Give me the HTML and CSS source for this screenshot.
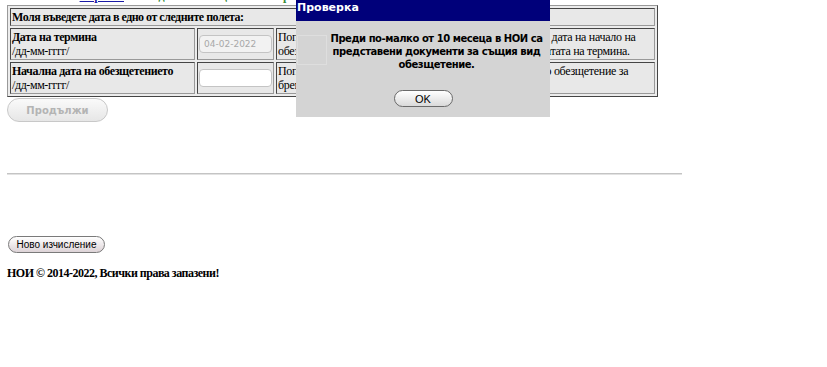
FILE: index.html
```html
<!DOCTYPE html>
<html>
<head>
    <meta http-equiv="Content-Type" content="text/html; charset=UTF-8">
    <link rel="stylesheet" href="styles.css">
</head>
<body>
    <div class="steps">
        Стъпка 2 от 3 <a href="#">Обратно</a> - <span class="note">Въведените обезщетения за бременност и раждане</span>
    </div>

    <table class="form-table">
        <tr>
            <td colspan="3" class="caption">Моля въведете дата в едно от следните полета:</td>
        </tr>
        <tr>
            <td class="label"><strong>Дата на термина</strong><br>/дд-мм-гггг/</td>
            <td class="field"><input type="text" class="date-input" value="04-02-2022" disabled></td>
            <td class="hint">Попълнете, ако искате да посочите различна от термина дата на начало на<br>обезщетението, различна от изчислената служебно от датата на термина.</td>
        </tr>
        <tr>
            <td class="label"><strong>Начална дата на обезщетението</strong><br>/дд-мм-гггг/</td>
            <td class="field"><input type="text" class="date-input"></td>
            <td class="hint">Попълнете, ако търсите обезщетение след изтекло друго обезщетение за<br>бременност и раждане.</td>
        </tr>
    </table>

    <button class="btn-continue" disabled>Продължи</button>

    <hr class="divider">

    <button class="btn-new">Ново изчисление</button>

    <p class="footer">НОИ © 2014-2022, Всички права запазени!</p>

    <div class="dialog">
        <div class="dialog-title">Проверка</div>
        <div class="dialog-body">
            <div class="dialog-icon"></div>
            <div class="dialog-message">Преди по-малко от 10 месеца в НОИ са<br>представени документи за същия вид<br>обезщетение.</div>
        </div>
        <div class="dialog-buttons">
            <button class="btn-ok">OK</button>
        </div>
    </div>
</body>
</html>
```

FILE: styles.css
```css
body {
    margin: 0 7px;
    font-family: "Liberation Serif", serif;
    font-size: 12px;
    letter-spacing: -0.3px;
    color: #000;
    background: #fff;
}

.steps {
    margin-top: -11px;
    height: 15px;
    line-height: 15px;
    font-weight: bold;
    color: #333;
    white-space: nowrap;
}

.steps a {
    color: #1a1aa6;
}

.note {
    color: #3b8c3b;
}

.form-table {
    width: 651px;
    margin-top: 1px;
    border: 1px outset #999;
    border-spacing: 2px;
    background-color: #ececec;
}

.form-table td {
    border: 1px inset #999;
    padding: 1px;
    background-color: #e8e8e8;
    line-height: 14px;
}

.caption {
    font-weight: bold;
    letter-spacing: -0.5px;
}

.label {
    width: 181px;
    vertical-align: top;
    padding-top: 2px;
    padding-bottom: 2px;
    letter-spacing: -0.4px;
}

.field {
    width: 71px;
    text-align: center;
}

.hint {
    vertical-align: top;
    padding-top: 2px;
    white-space: nowrap;
}

.date-input {
    box-sizing: border-box;
    width: 73px;
    height: 18px;
    margin: 0;
    padding: 0 4px;
    border: 1px solid #c4c4c4;
    border-radius: 4px;
    background: #fff;
    font-family: "DejaVu Sans", sans-serif;
    font-size: 9px;
    letter-spacing: 0;
    color: #000;
}

.date-input:disabled {
    background: #f2f2f2;
    color: #a8a8a8;
}

.btn-continue {
    display: block;
    width: 101px;
    height: 24px;
    margin-top: 1px;
    border: 1px solid #c8c8c8;
    border-radius: 12px;
    background: linear-gradient(#fafafa, #e6e6e6);
    font-family: "DejaVu Sans", sans-serif;
    font-size: 10px;
    font-weight: bold;
    letter-spacing: 0;
    color: #b4b4b4;
}

.divider {
    width: 675px;
    margin: 51px 0 0 0;
    height: 0;
    border: 0;
    border-top: 1px solid #c4c4c4;
    border-bottom: 1px solid #e2e2e2;
}

.btn-new {
    display: block;
    width: 97px;
    height: 17px;
    margin: 61px 0 0 1px;
    padding: 0;
    border: 1px solid #7a7a7a;
    border-radius: 9px;
    background: linear-gradient(#ffffff, #ddd3d7);
    font-family: "Liberation Sans", sans-serif;
    font-size: 10px;
    letter-spacing: 0;
    color: #000;
}

.footer {
    margin: 13px 0 0 0;
    font-weight: bold;
    font-size: 12px;
    letter-spacing: -0.5px;
}

.dialog {
    position: absolute;
    top: 0;
    left: 296px;
    width: 254px;
    height: 117px;
    background: #d4d4d4;
    font-family: "DejaVu Sans", sans-serif;
    letter-spacing: 0;
}

.dialog-title {
    height: 21px;
    line-height: 16px;
    padding-left: 1px;
    background: #00007a;
    color: #fff;
    font-size: 11px;
    font-weight: bold;
}

.dialog-body {
    display: flex;
    align-items: flex-start;
    padding: 14px 0 0 1px;
    height: 55px;
}

.dialog-icon {
    flex: none;
    width: 30px;
    height: 30px;
    box-sizing: border-box;
    border: 1px solid #dedede;
}

.dialog-message {
    flex: 1;
    padding-right: 4px;
    margin-top: -3px;
    text-align: center;
    font-size: 10px;
    font-weight: bold;
    letter-spacing: -0.45px;
    line-height: 13px;
    white-space: nowrap;
}

.dialog-buttons {
    text-align: center;
    padding-top: 0;
}

.btn-ok {
    width: 59px;
    height: 17px;
    padding: 0;
    border: 1px solid #6a6a6a;
    border-radius: 9px;
    background: linear-gradient(#ffffff, #dadada);
    font-family: "Liberation Sans", sans-serif;
    font-size: 11px;
    color: #000;
}
```
